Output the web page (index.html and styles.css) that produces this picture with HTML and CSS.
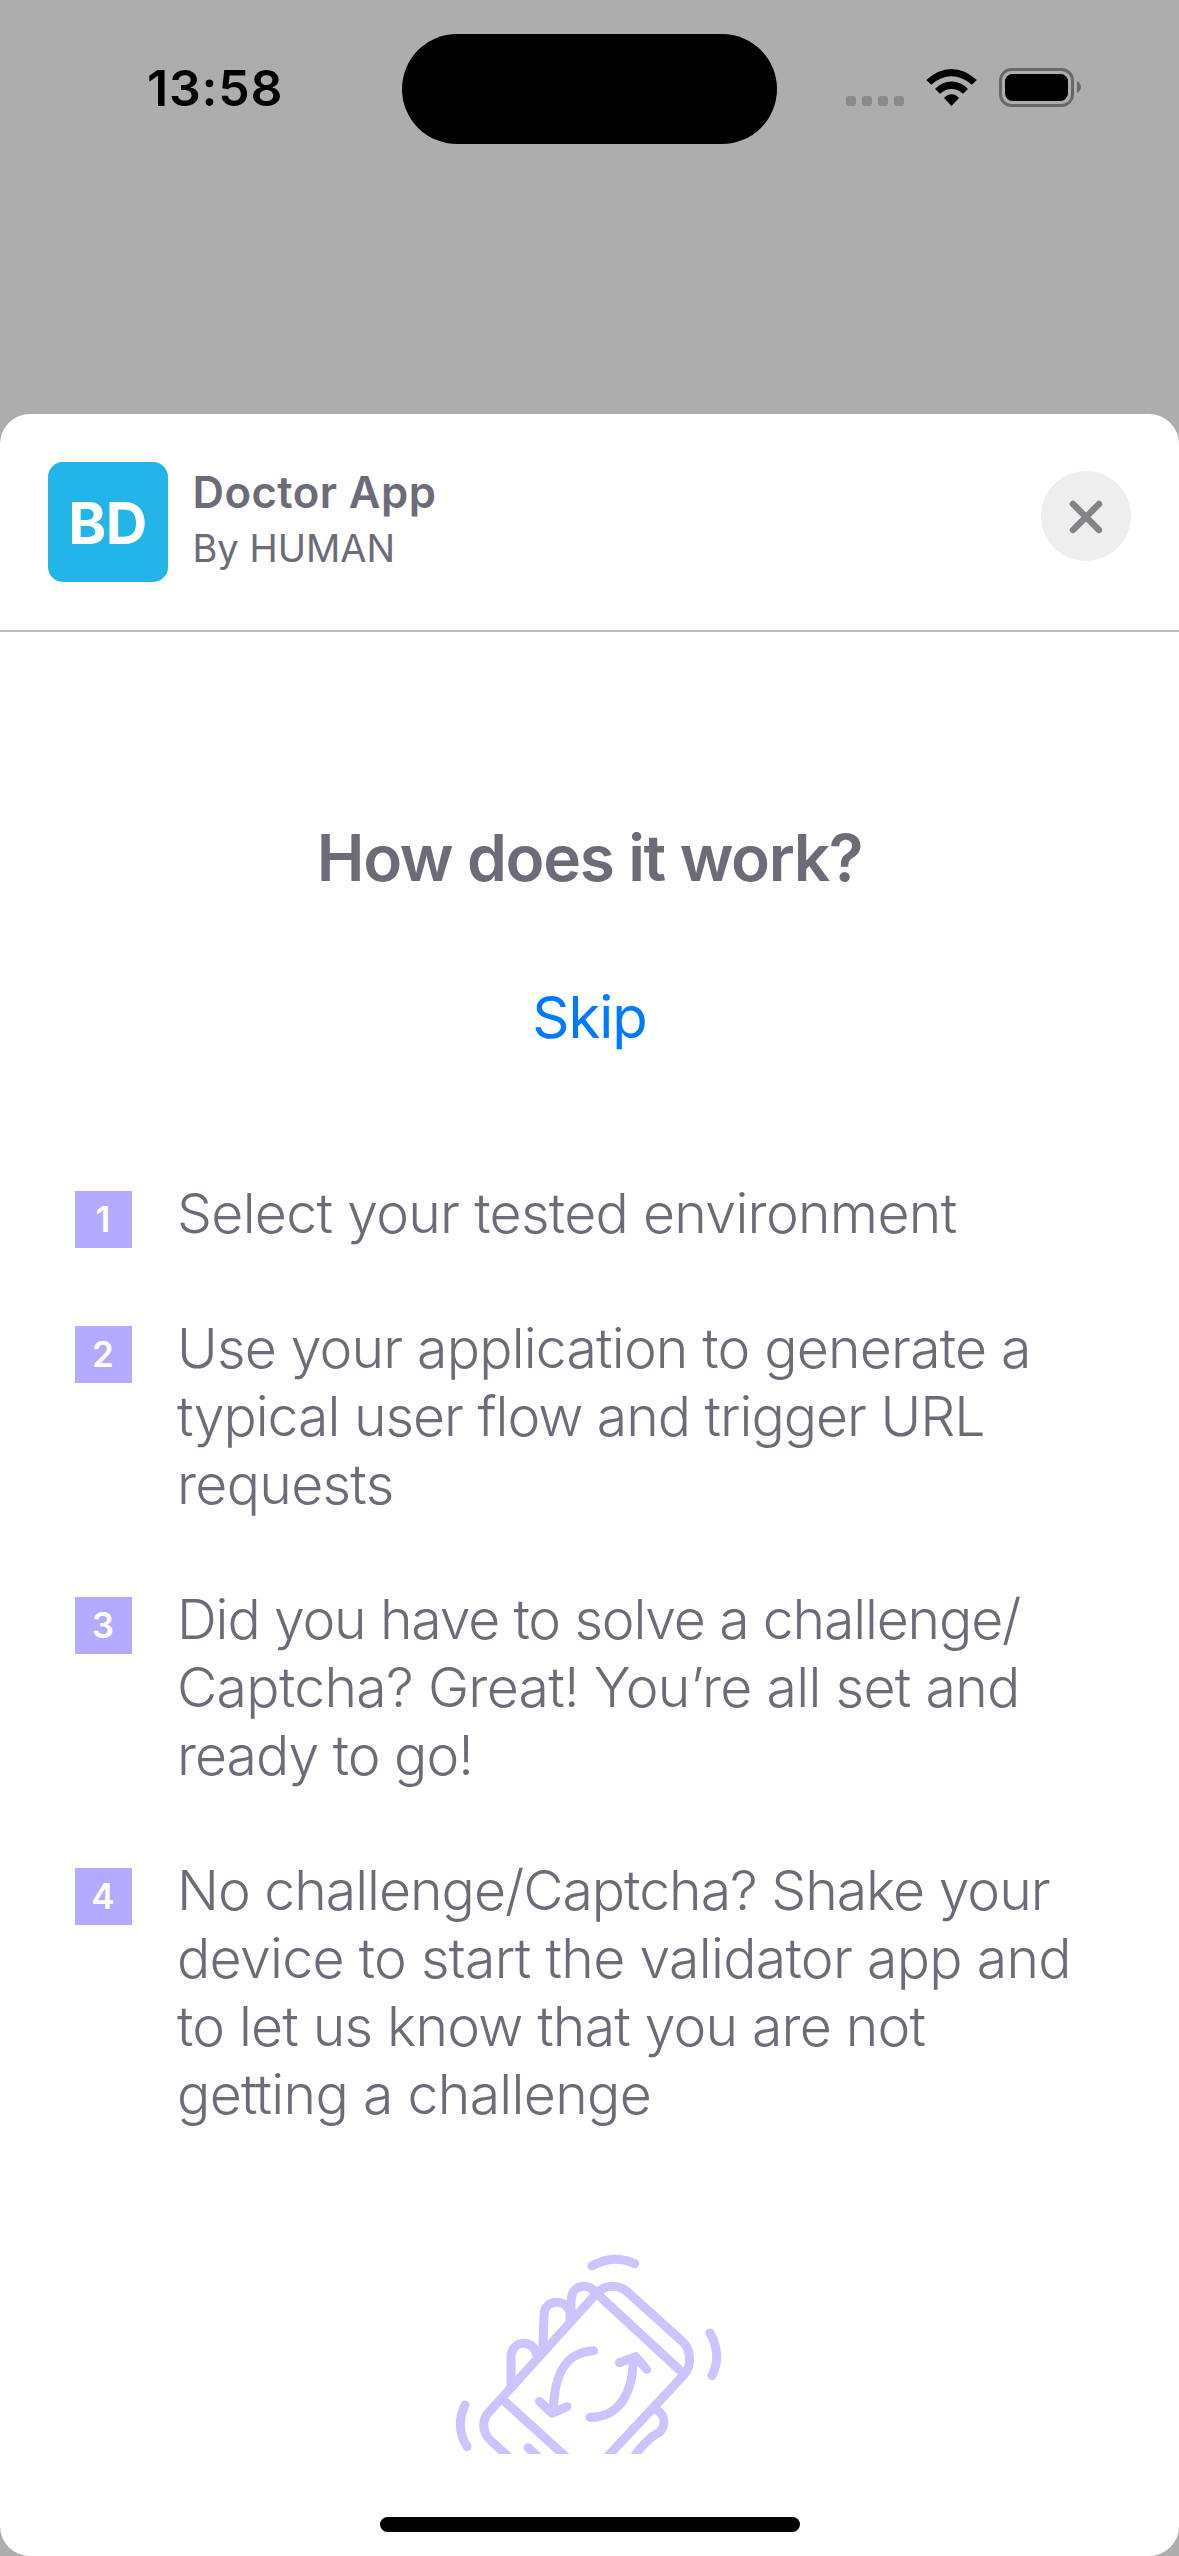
FILE: index.html
```html
<!DOCTYPE html>
<html lang="en">
<head>
<meta charset="utf-8">
<title>Doctor App</title>
<link rel="stylesheet" href="styles.css">
</head>
<body>
<div class="screen">
  <header class="status">
    <span class="time">13:58</span>
    <span class="island"></span>
    <svg class="indicators" width="240" height="50" viewBox="0 0 240 50" aria-hidden="true">
      <g fill="#8a8a8a">
        <rect x="6" y="33" width="10" height="10" rx="3"/>
        <rect x="22" y="33" width="10" height="10" rx="3"/>
        <rect x="38" y="33" width="10" height="10" rx="3"/>
        <rect x="54" y="33" width="10" height="10" rx="3"/>
      </g>
      <path d="M86.200 17Q98.500 6 111.500 6Q124.500 6 136.800 17L131.800 21.700Q122.500 13.200 111.500 13.200Q100.500 13.200 91.200 21.700Z"/>
      <path d="M95 26Q102.500 18.600 111.500 18.600Q120.500 18.600 128 26L123 30.800Q118 26 111.500 26Q105 26 100 30.800Z"/>
      <path d="M104 35Q107 31.200 111.500 31.200Q116 31.200 119 35L111.500 43Z"/>
      <rect x="160.500" y="6.500" width="72" height="36" rx="11" fill="none" stroke="#696969" stroke-width="3"/>
      <rect x="165" y="11" width="63" height="27" rx="7.500"/>
      <path d="M237 18Q241 20.500 241 24T237 30Z" fill="#696969"/>
    </svg>
  </header>
  <main class="sheet">
    <section class="app">
      <div class="logo">BD</div>
      <div class="names">
        <h1>Doctor App</h1>
        <p>By HUMAN</p>
      </div>
      <button class="close" aria-label="Close">
        <svg width="90" height="90" viewBox="0 0 90 90"><path d="M32 33L58 59M58 33L32 59" stroke="#848488" stroke-width="6.500" stroke-linecap="round"/></svg>
      </button>
    </section>
    <h2>How does it work?</h2>
    <a class="skip">Skip</a>
    <ol class="steps">
      <li><span class="num">1</span><p><span class="loose">Select your tested environment</span></p></li>
      <li><span class="num">2</span><p>Use your application to generate a<br><span class="tight">typical user flow and trigger URL</span><br><span class="loose">requests</span></p></li>
      <li><span class="num">3</span><p><span class="tighter">Did you have to solve a challenge/</span><br><span class="loose">Captcha? Great! You’re all set and</span><br><span class="tight">ready to go!</span></p></li>
      <li><span class="num">4</span><p><span class="tight">No challenge/Captcha? Shake your</span><br><span class="loose">device to start the validator app and</span><br>to let us know that you are not<br><span class="loose">getting a challenge</span></p></li>
    </ol>
    <svg class="shake" width="320" height="224" viewBox="0 0 960 672" aria-hidden="true">
      <path d="M486 108Q550 71 614 101M840 309Q877 375 846 437M105 525Q74 590 111 650"/>
      <path d="M500 190L180 543Q161 562 161 585Q161 612 183 633L240 684M500 190Q520 169 547 169Q575 169 597 190L760 337Q779 356 779 388Q779 415 763 433L525 688M500 190L763 433M214 505L420 692M294 653L334 690"/>
      <path d="M243 470V383C243 356 260 340 283 340Q312 342 320 375M339 350L342 255C342 230 360 217 381 217C402 217 420 232 420 255V272M423 258V212C424 185 440 169 462 169Q478 169 492 182M681 540Q702 553 702 577Q700 600 683 610Q650 627 612 680"/>
      <path d="M491 362C410 366 372 425 370 545M328 514L366 550L411 530M480 562C560 562 609 500 610 385M568 398L617 380L650 418"/>
    </svg>
    <div class="home"></div>
  </main>
</div>
</body>
</html>
```
FILE: styles.css
```css
* { box-sizing: border-box; margin: 0; padding: 0; }
body { background: #adadad; font-family: Inter, "Liberation Sans", sans-serif; color: #6c6b78; }
.screen { width: 1179px; height: 2556px; display: flex; flex-direction: column; overflow: hidden; }
.status { height: 414px; padding: 34px 98px 0 147px; display: flex; align-items: flex-start; flex: none; }
.time { width: 255px; padding-top: 24px; font-size: 50px; line-height: 60px; font-weight: 600; color: #000; letter-spacing: .8px; }
.island { width: 375px; height: 110px; border-radius: 55px; background: #000; }
.indicators { margin: 29px 0 0 63px; overflow: visible; }
.sheet { flex: 1; background: #fff; border-radius: 30px; display: flex; flex-direction: column; align-items: center; }
.app { width: 100%; height: 218px; padding: 48px; border-bottom: 2px solid #bdbdbd; display: flex; align-items: flex-start; }
.logo { width: 120px; height: 120px; padding-right: 1px; border-radius: 15px; background: #23b5ea; color: #fff; font-size: 57.500px; font-weight: 700; line-height: 122px; text-align: center; letter-spacing: -.5px; }
.names { padding: 4px 0 0 24.500px; flex: 1; }
.names h1 { font-size: 43.600px; line-height: 54px; font-weight: 600; letter-spacing: .45px; }
.names p { font-size: 38px; line-height: 56px; }
.close { width: 90px; height: 90px; margin-top: 9px; border: 0; border-radius: 50%; background: #eee; }
.close svg { display: block; }
h2 { margin-top: 186px; font-size: 64px; line-height: 80px; font-weight: 600; letter-spacing: -1.350px; }
.skip { margin-top: 82px; font-size: 58px; line-height: 74px; color: #007aff; letter-spacing: -1px; }
.steps { width: 100%; list-style: none; padding: 0 75px; margin-top: 125px; display: flex; flex-direction: column; gap: 67px; }
.steps li { display: flex; align-items: flex-start; gap: 45px; }
.num { width: 57px; height: 57px; margin: 12px 0 -1px; padding-right: 1px; background: #b4aaff; color: #fff; font-size: 35px; font-weight: 600; line-height: 57px; text-align: center; }
.steps p { font-size: 55.300px; line-height: 68px; font-weight: 300; white-space: nowrap; letter-spacing: -.8px; }
.steps .loose { letter-spacing: -.680px; }
.steps .tight { letter-spacing: -1px; }
.steps .tighter { letter-spacing: -1.150px; }
.shake { margin-top: 102px; fill: none; stroke: #cbc4ff; stroke-width: 27; stroke-linecap: round; stroke-linejoin: round; }
.home { width: 420px; height: 15px; border-radius: 8px; background: #000; margin-top: auto; margin-bottom: 24px; }
```
